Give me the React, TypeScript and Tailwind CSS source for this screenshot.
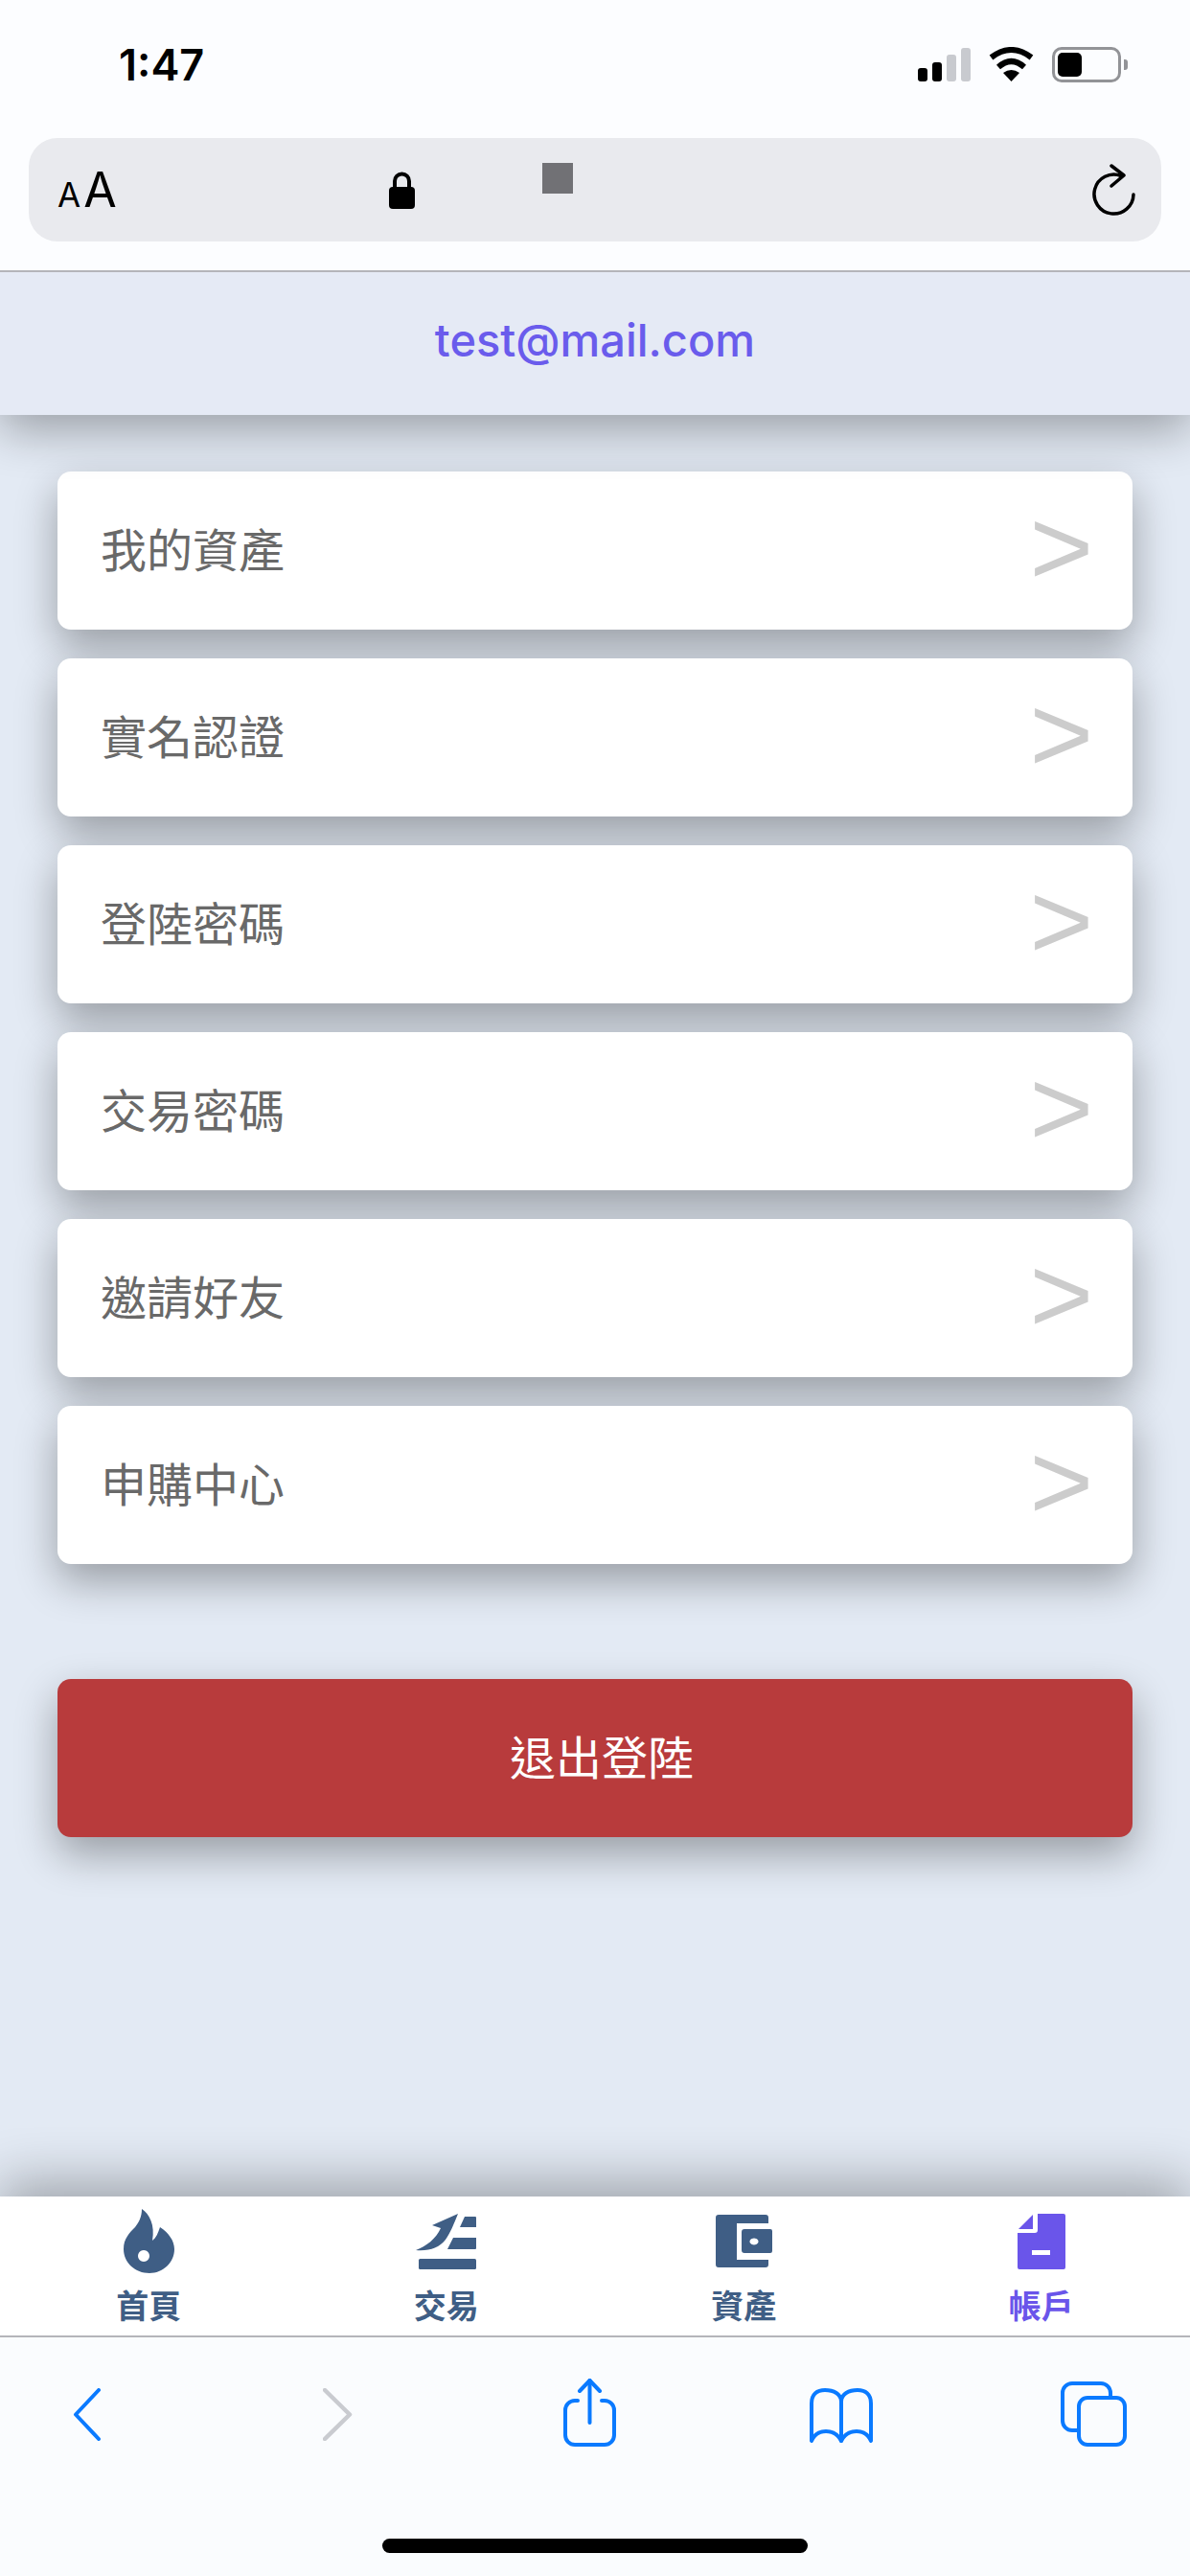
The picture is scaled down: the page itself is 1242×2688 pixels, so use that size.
const cjk = "font-['Noto_Sans_CJK_TC','Noto_Sans_CJK_SC',sans-serif]";

const menuItems = ["我的資產", "實名認證", "登陸密碼", "交易密碼", "邀請好友", "申購中心"];

function StatusIcons() {
  return (
    <div className="flex items-start">
      {/* signal */}
      <div className="flex items-end gap-[5px] h-[36px]">
        <div className="w-[10px] h-[14px] rounded-[3px] bg-black" />
        <div className="w-[10px] h-[20px] rounded-[3px] bg-black" />
        <div className="w-[10px] h-[28px] rounded-[3px] bg-[#c8cacf]" />
        <div className="w-[10px] h-[35px] rounded-[3px] bg-[#c8cacf]" />
      </div>
      {/* wifi */}
      <svg width="47" height="36" viewBox="0 0 47 36" className="ml-[19px]">
        <path d="M2.5 11 Q23.5 -5 44.5 11" fill="none" stroke="#000" strokeWidth="6" />
        <path d="M10 21 Q23.5 9 37 21" fill="none" stroke="#000" strokeWidth="6" />
        <path d="M23.5 36 L15 27 Q23.5 21 32 27Z" fill="#000" />
      </svg>
      {/* battery */}
      <div className="ml-[19px] flex items-center">
        <div className="w-[72px] h-[37px] rounded-[10px] border-[3px] border-[#929397] p-[3px]">
          <div className="w-[25px] h-full rounded-[5px] bg-black" />
        </div>
        <div className="ml-[3px] w-[4px] h-[11px] rounded-r-[3px] bg-[#929397]" />
      </div>
    </div>
  );
}

function UrlBar() {
  return (
    <div className="mx-[30px] h-[108px] rounded-[30px] bg-[#e9eaee] flex items-center pl-[30px] pr-[27px]">
      <div className="flex items-baseline gap-[3px] w-[346px] font-['Inter',sans-serif] text-black leading-none">
        <span className="text-[35px]">A</span>
        <span className="text-[50px]">A</span>
      </div>
      <svg width="27" height="39" viewBox="0 0 27 39">
        <rect x="0" y="16" width="27" height="23" rx="4" fill="#000" />
        <path d="M6 18 V10 a7.5 7.5 0 0 1 15 0 V18" fill="none" stroke="#000" strokeWidth="4" />
      </svg>
      <div className="ml-[133px] self-start mt-[26px] w-[32px] h-[32px] bg-[#717175]" />
      <svg width="45" height="54" viewBox="0 0 45 54" className="ml-auto" fill="none" stroke="#000" strokeWidth="3.5" strokeLinecap="round" strokeLinejoin="round">
        <path d="M43 32 A20.5 20.5 0 1 1 30 12.5" />
        <path d="M20 2 L33 12 L20 23" />
      </svg>
    </div>
  );
}

function MenuCard({ label }: { label: string }) {
  return (
    <div className="h-[165px] rounded-[14px] bg-white flex items-center justify-between pl-[45px] pr-[41px] shadow-[0_18px_44px_rgba(0,0,0,0.33)]">
      <span className={`${cjk} text-[48px] leading-none pb-[8px] text-[#696969]`}>{label}</span>
      <span className="font-['Liberation_Sans',sans-serif] text-[114px] leading-none pb-[7px] text-[#cccccc]">&gt;</span>
    </div>
  );
}

function FlameIcon() {
  return (
    <svg width="53" height="67" viewBox="0 0 53 67">
      <path
        fill="#3f5e85"
        fillRule="evenodd"
        d="M19 0 C27 5 33 17 30 33 C34 30 36 25 38 19 C47 25 53 33 53 42 C53 56 41 67 27 67 C12 67 0 56 0 42 C0 31 6 25 12 19 C16 14 19 8 19 0Z M21 43 a6 6 0 1 0 0.01 0Z"
      />
    </svg>
  );
}

function TradeIcon() {
  return (
    <svg width="63" height="58" viewBox="0 0 63 58" fill="#3f5e85">
      <path d="M44 0 L17 12 L26 15 C21 26 11 34 0 38 C14 39 24 36 31 27 C36 20 40 10 44 0Z" />
      <path d="M51 3 H62 a1 1 0 0 1 1 1 V14 H46Z" />
      <path d="M39 25 H63 V36 a1 1 0 0 1 -1 1 H33Z" />
      <rect x="3" y="47" width="60" height="11" rx="1.5" />
    </svg>
  );
}

function WalletIcon() {
  return (
    <svg width="59" height="55" viewBox="0 0 59 55" fill="#3f5e85">
      <path d="M3 0 H52 a3 3 0 0 1 3 3 V9 H22 V47 H55 V52 a3 3 0 0 1 -3 3 H3 a3 3 0 0 1 -3 -3 V3 a3 3 0 0 1 3 -3Z" />
      <path
        fillRule="evenodd"
        d="M30 15 H57 a2 2 0 0 1 2 2 V38 a2 2 0 0 1 -2 2 H30 a3 3 0 0 1 -3 -3 V18 a3 3 0 0 1 3 -3Z M40 24.5 a4.5 3.5 0 1 0 0.01 0Z"
      />
    </svg>
  );
}

function DocIcon() {
  return (
    <svg width="50" height="58" viewBox="0 0 50 58" fill="#6a55ea">
      <path
        fillRule="evenodd"
        d="M21 0 H48 a2 2 0 0 1 2 2 V56 a2 2 0 0 1 -2 2 H2 a2 2 0 0 1 -2 -2 V20 H18 a3 3 0 0 0 3 -3Z M15 38 V43 H34 V38Z"
      />
      <path d="M16 1 V16 H1Z" />
    </svg>
  );
}

function TabItem({ label, active, children }: { label: string; active?: boolean; children: React.ReactNode }) {
  return (
    <div className="flex-1 flex flex-col items-center">
      <div className="h-[67px] flex items-center justify-center">{children}</div>
      <span className={`${cjk} mt-[16px] text-[34px] leading-none font-bold ${active ? "text-[#6a55ea]" : "text-[#3f5e85]"}`}>
        {label}
      </span>
    </div>
  );
}

function SafariToolbar() {
  const blue = "#0a7aff";
  return (
    <div className="relative z-20 h-[249px] shrink-0 bg-[#fafcfe] flex flex-col">
      <div className="flex items-start h-[210px] pt-[43px] pl-[76px]">
        <svg width="29" height="55" viewBox="0 0 29 55" className="mt-[10px]" fill="none" stroke={blue} strokeWidth="4" strokeLinecap="round" strokeLinejoin="round">
          <path d="M27 2 L3 27.5 L27 53" />
        </svg>
        <svg width="31" height="55" viewBox="0 0 31 55" className="mt-[10px] ml-[232px]" fill="none" stroke="#c9cbd0" strokeWidth="4.5" strokeLinecap="round" strokeLinejoin="round">
          <path d="M2 2 L28 27.5 L2 53" />
        </svg>
        <svg width="55" height="71" viewBox="0 0 55 71" className="ml-[220px]" fill="none" stroke={blue} strokeWidth="4" strokeLinecap="round" strokeLinejoin="round">
          <path d="M15 23 H12 a10 10 0 0 0 -10 10 V59 a10 10 0 0 0 10 10 H43 a10 10 0 0 0 10 -10 V33 a10 10 0 0 0 -10 -10 H40" />
          <path d="M27.5 2 V46" />
          <path d="M17 13 L27.5 2 L38 13" />
        </svg>
        <svg width="66" height="57" viewBox="0 0 66 57" className="ml-[202px] mt-[10px]" fill="none" stroke={blue} strokeWidth="4" strokeLinejoin="round">
          <path d="M2 55 V16 C2 6 8 2 16 2 C25 2 33 6 33 14 V55 C29 47 23 45 17 45 C11 45 5 48 2 55Z" />
          <path d="M64 55 V16 C64 6 58 2 50 2 C41 2 33 6 33 14 V55 C37 47 43 45 49 45 C55 45 61 48 64 55Z" />
        </svg>
        <svg width="69" height="68" viewBox="0 0 69 68" className="ml-[196px] mt-[3px]" fill="none" stroke={blue} strokeWidth="4" strokeLinecap="round">
          <path d="M52 15 V12 a10 10 0 0 0 -10 -10 H12 a10 10 0 0 0 -10 10 V41 a10 10 0 0 0 10 10 H17" />
          <rect x="19" y="17" width="48" height="49" rx="9" />
        </svg>
      </div>
      <div className="flex justify-center">
        <div className="w-[444px] h-[15px] rounded-full bg-black" />
      </div>
    </div>
  );
}

export default function App() {
  return (
    <div className="w-[1242px] h-[2688px] flex flex-col overflow-hidden bg-[#e3eaf4]">
      {/* Safari top */}
      <div className="relative z-20 h-[282px] shrink-0 bg-[#fcfdff]">
        <div className="h-[144px] flex items-start justify-between pt-[49px] pl-[124px] pr-[65px]">
          <span className="font-['Inter',sans-serif] font-semibold text-[45px] leading-[38px] text-black">1:47</span>
          <StatusIcons />
        </div>
        <UrlBar />
      </div>

      {/* Header */}
      <div className="relative z-10 h-[151px] shrink-0 border-t-2 border-[#b4b5ba] bg-[#e5eaf5] flex items-center justify-center shadow-[0_15px_50px_rgba(0,0,0,0.33)]">
        <span className="font-['Inter',sans-serif] font-medium text-[47px] leading-none pb-[8px] text-[#6a5cec]">test@mail.com</span>
      </div>

      {/* Menu */}
      <div className="flex-1 px-[60px] pt-[59px]">
        <div className="flex flex-col gap-[30px]">
          {menuItems.map((item) => (
            <MenuCard key={item} label={item} />
          ))}
        </div>
        <div className="mt-[120px] h-[165px] rounded-[14px] bg-[#b83b3c] flex items-center justify-center pl-[14px] shadow-[0_18px_44px_rgba(0,0,0,0.33)]">
          <span className={`${cjk} text-[48px] leading-none pb-[8px] text-white`}>退出登陸</span>
        </div>
      </div>

      {/* Tab bar */}
      <div className="relative z-10 h-[147px] shrink-0 bg-white border-b-2 border-[#b4b5ba] flex pt-[13px] shadow-[0_-15px_55px_rgba(0,0,0,0.3)]">
        <TabItem label="首頁"><FlameIcon /></TabItem>
        <TabItem label="交易"><TradeIcon /></TabItem>
        <TabItem label="資產"><WalletIcon /></TabItem>
        <TabItem label="帳戶" active><DocIcon /></TabItem>
      </div>

      <SafariToolbar />
    </div>
  );
}
